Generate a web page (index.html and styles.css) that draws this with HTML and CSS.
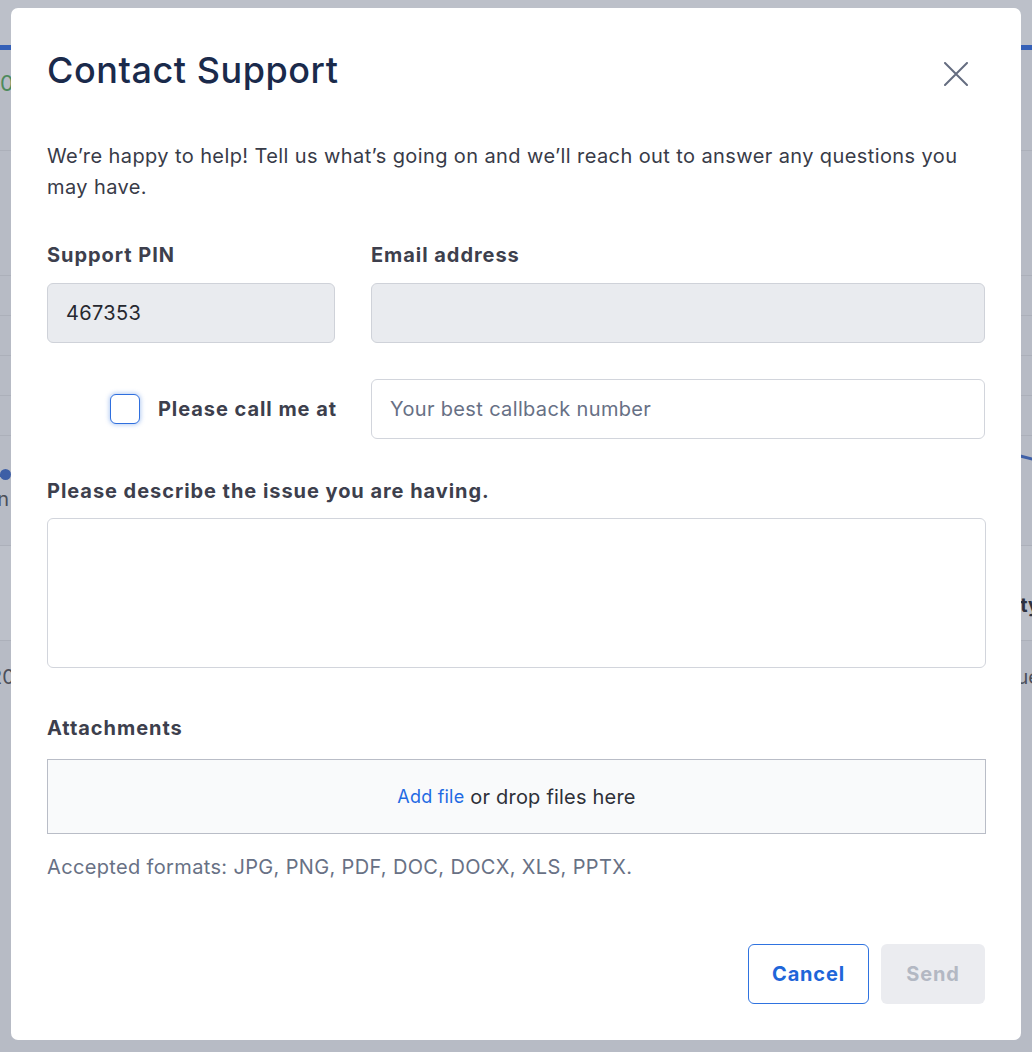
FILE: index.html
```html
<!DOCTYPE html>
<html lang="en">
<head>
<meta charset="utf-8">
<title>Contact Support</title>
<link rel="stylesheet" href="styles.css">
</head>
<body>
<div class="backdrop" aria-hidden="true">
  <div class="bd-top"></div>
  <div class="bd-blue"></div>
  <div class="bd-row h100"><span class="bd-green">00</span></div>
  <div class="bd-row h125 line"></div>
  <div class="bd-row h40 line"></div>
  <div class="bd-row h40 line"></div>
  <div class="bd-row h40 line"></div>
  <div class="bd-row h40 line"></div>
  <div class="bd-row h110 line chart">
    <div class="bd-left"><span class="bd-dot"></span><span class="bd-txt bd-an">an</span></div>
    <div class="bd-right"><span class="bd-curve"></span></div>
  </div>
  <div class="bd-row h95 line light"><span></span><span class="bd-txt bold bd-ty">ty</span></div>
  <div class="bd-row h72 line"><span class="bd-txt bd-20">20</span><span class="bd-txt bd-ue">ue</span></div>
</div>

<div class="modal" role="dialog" aria-labelledby="title">
  <div class="modal-head">
    <h1 id="title" class="title">Contact Support</h1>
    <button class="close" type="button" aria-label="Close">
      <svg width="24" height="24" viewBox="0 0 24 24"><path d="M1 1 L23 23 M23 1 L1 23" stroke="#656d80" stroke-width="2" stroke-linecap="round" fill="none"/></svg>
    </button>
  </div>
  <p class="intro">We’re happy to help! Tell us what’s going on and we’ll reach out to answer any questions you may have.</p>

  <div class="grid">
    <div class="field">
      <label class="label">Support PIN</label>
      <input class="input disabled" type="text" value="467353" readonly>
    </div>
    <div class="field">
      <label class="label">Email address</label>
      <input class="input disabled" type="text" value="" readonly>
    </div>
    <div class="callme">
      <input class="check" type="checkbox" id="callme">
      <label class="label" for="callme">Please call me at</label>
    </div>
    <div class="field">
      <input class="input" type="text" placeholder="Your best callback number">
    </div>
  </div>

  <label class="label describe">Please describe the issue you are having.</label>
  <textarea class="textarea"></textarea>

  <label class="label attach">Attachments</label>
  <div class="dropzone"><a class="addfile" href="#">Add file</a> or drop files here</div>
  <p class="formats">Accepted formats: JPG, PNG, PDF, DOC, DOCX, XLS, PPTX.</p>

  <div class="footer">
    <button class="btn cancel" type="button">Cancel</button>
    <button class="btn send" type="button" disabled>Send</button>
  </div>
</div>
</body>
</html>
```

FILE: styles.css
```css
* { box-sizing: border-box; }
html, body { margin: 0; padding: 0; }
body {
  width: 1032px;
  height: 1052px;
  overflow: hidden;
  background: #b7bbc5;
  font-family: Inter, "Noto Sans", "Liberation Sans", sans-serif;
  position: relative;
}

/* dimmed page behind the dialog */
.backdrop { width: 1032px; display: flex; flex-direction: column; }
.bd-top { height: 45px; background: #bcc0c9; }
.bd-blue { height: 5px; background: #3560b7; }
.bd-row { display: flex; justify-content: space-between; align-items: center; }
.bd-row.line { border-top: 1px solid #acb0ba; }
.bd-row.light { background: #bcc0c9; }
.h100 { height: 100px; }
.h125 { height: 125px; }
.h40 { height: 40px; }
.h110 { height: 110px; }
.h95 { height: 95px; }
.h72 { height: 72px; }
.bd-green { color: #4d8a5c; font-size: 22px; margin-left: -14px; margin-top: -34px; }
.bd-txt { color: #4b4f59; font-size: 20px; }
.bd-txt.bold { font-weight: 700; color: #2e3240; }
.chart { align-items: flex-start; }
.bd-left { display: flex; flex-direction: column; margin-left: -14px; margin-top: 33px; }
.bd-dot { width: 30px; height: 12px; position: relative; display: block; }
.bd-dot::before { content: ""; position: absolute; left: 0; top: 5px; width: 20px; height: 3px; background: #3e5fa6; }
.bd-dot::after { content: ""; position: absolute; left: 14px; top: 0; width: 11px; height: 11px; border-radius: 50%; background: #3e5fa6; }
.bd-an { margin-top: 6px; }
.bd-right { margin-top: 20px; }
.bd-curve { display: block; width: 16px; height: 3px; background: #3e5fa6; transform: rotate(14deg); margin-right: -2px; }
.bd-ty { margin-right: -8px; margin-top: 24px; }
.bd-20 { margin-left: -10px; }
.bd-ue { margin-right: -8px; }

/* dialog */
.modal {
  position: absolute;
  left: 11px;
  top: 8px;
  width: 1010px;
  height: 1032px;
  background: #fff;
  border-radius: 7px;
  padding: 40px 36px 36px;
}
.modal-head { display: flex; justify-content: space-between; align-items: flex-start; }
.title {
  margin: 0;
  font-size: 36px;
  line-height: 44px;
  font-weight: 500;
  color: #1a2a4b;
  letter-spacing: 0.55px;
}
.close {
  width: 40px; height: 40px;
  margin-top: 6px; margin-right: 9px;
  border: 0; background: transparent; padding: 0;
  display: flex; align-items: center; justify-content: center;
}
.intro {
  margin: 47px 0 0;
  font-size: 20px;
  line-height: 31px;
  color: #383b48;
  letter-spacing: 0.4px;
}
.label {
  display: block;
  font-size: 20px;
  line-height: 24px;
  font-weight: 700;
  color: #3d3f4d;
  letter-spacing: 0.95px;
}
.grid {
  margin-top: 40px;
  display: grid;
  grid-template-columns: 288px 1fr;
  column-gap: 36px;
  row-gap: 36px;
}
.field { display: flex; flex-direction: column; justify-content: flex-end; gap: 16px; }
.input {
  height: 60px;
  width: 100%;
  border: 1px solid #d2d5dc;
  border-radius: 6px;
  padding: 0 18px;
  font: inherit;
  font-size: 20px;
  color: #26282f;
  background: #fff;
  outline: none;
  letter-spacing: 0.35px;
}
.input.disabled { background: #e9ebef; border-color: #cfd2d9; }
.input::placeholder { color: #677085; }
.callme { display: flex; align-items: center; justify-content: flex-end; gap: 18px; margin-right: -2px; }
.check {
  appearance: none;
  -webkit-appearance: none;
  margin: 0;
  width: 30px; height: 30px;
  border: 1.5px solid #2f6fde;
  border-radius: 6px;
  background: #fff;
  box-shadow: 0 0 4px 1px rgba(47, 111, 222, 0.35);
}
.describe { margin-top: 40px; }
.textarea {
  display: block;
  margin-top: 15px;
  width: 939px;
  height: 150px;
  border: 1px solid #d2d5dc;
  border-radius: 6px;
  resize: none;
  font: inherit;
  outline: none;
}
.attach { margin-top: 48px; }
.dropzone {
  margin-top: 19px;
  width: 939px;
  height: 75px;
  border: 1px solid #b9bdc7;
  background: #f9fafb;
  display: flex; align-items: center; justify-content: center;
  font-size: 20px;
  color: #2e3038;
  gap: 6px;
  letter-spacing: 0.2px;
}
.addfile { color: #1f6ae3; text-decoration: none; font-size: 18px; }
.formats {
  margin: 21px 0 0;
  font-size: 20px;
  line-height: 24px;
  color: #687185;
  letter-spacing: 0.35px;
}
.footer { margin-top: 65px; display: flex; justify-content: flex-end; gap: 12px; }
.btn {
  height: 60px;
  border-radius: 6px;
  font: inherit;
  font-size: 20px;
  font-weight: 700;
  letter-spacing: 0.8px;
}
.cancel { width: 121px; border: 1px solid #2f73e0; background: #fff; color: #1f66d9; }
.send { width: 104px; border: 0; background: #ebecf0; color: #b3b8c3; }
```
